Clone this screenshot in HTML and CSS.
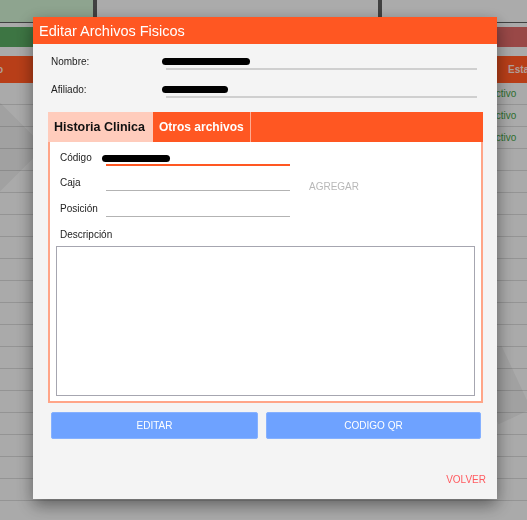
FILE: index.html
```html
<!DOCTYPE html>
<html lang="es">
<head>
  <meta charset="UTF-8">
  <meta name="viewport" content="width=device-width, initial-scale=1.0">
  <title>Editar Archivos Fisicos</title>
  <link rel="stylesheet" href="styles.css">
</head>
<body>

<div class="page">
  <div class="stats">
    <div class="stat stat-green"></div>
    <div class="stat"></div>
    <div class="stat"></div>
  </div>
  <div class="status-bar">
    <span class="status-ok"></span>
    <span class="status-off"></span>
  </div>
  <div class="list">
    <div class="list-head"><span class="col-name">Archivo</span><span class="col-state">Estado</span></div>
    <div class="list-row"><span class="col-state active">Activo</span></div>
    <div class="list-row"><span class="col-state active">Activo</span></div>
    <div class="list-row"><span class="col-state active">Activo</span></div>
    <div class="list-row"></div>
    <div class="list-row"></div>
    <div class="list-row"></div>
    <div class="list-row"></div>
    <div class="list-row"></div>
    <div class="list-row"></div>
    <div class="list-row"></div>
    <div class="list-row"></div>
    <div class="list-row"></div>
    <div class="list-row"></div>
    <div class="list-row"></div>
    <div class="list-row"></div>
    <div class="list-row"></div>
    <div class="list-row"></div>
    <div class="list-row"></div>
    <div class="list-row"></div>
  </div>
  <div class="watermark wm-left"></div>
  <div class="watermark wm-right"></div>
</div>

<div class="backdrop">
  <div class="modal">
    <div class="modal-header">Editar Archivos Fisicos</div>

    <div class="modal-body">
      <div class="info-row">
        <label>Nombre:</label>
        <div class="info-value"><span class="redacted redacted-lg"></span></div>
      </div>
      <div class="info-row">
        <label>Afiliado:</label>
        <div class="info-value"><span class="redacted redacted-md"></span></div>
      </div>

      <div class="tabs">
        <div class="tab-bar">
          <span class="tab active">Historia Clinica</span>
          <span class="tab">Otros archivos</span>
        </div>
        <div class="tab-panel">
          <div class="form-grid">
            <label class="row-1">Código</label>
            <div class="field focused row-1"><span class="redacted redacted-sm"></span></div>
            <label class="row-2">Caja</label>
            <div class="field row-2"></div>
            <button type="button" class="add-btn">AGREGAR</button>
            <label class="row-3">Posición</label>
            <div class="field row-3"></div>
          </div>
          <label class="desc-label">Descripción</label>
          <textarea class="desc-input"></textarea>
        </div>
      </div>

      <div class="actions">
        <button type="button" class="action-btn">EDITAR</button>
        <button type="button" class="action-btn">CODIGO QR</button>
      </div>

      <div class="modal-footer">
        <a class="back-link">VOLVER</a>
      </div>
    </div>
  </div>
</div>

</body>
</html>
```

FILE: styles.css
```css
/* Page behind the dialog */
body {
  margin: 0;
  font-family: 'Liberation Sans', Arial, sans-serif;
  background-color: #ececec;
  overflow: hidden;
  height: 520px;
}

.page {
  position: relative;
  height: 520px;
  overflow: hidden;
}

.stats {
  display: grid;
  grid-template-columns: 93px 1fr 145px;
  gap: 4px;
  height: 22px;
  background-color: #5a5a5a;
  border-bottom: 1px solid #5a5a5a;
}

.stat {
  background-color: #eeeeee;
}

.stat-green {
  background-color: #c5e3c6;
}

.status-bar {
  display: flex;
  height: 20px;
  margin-top: 4px;
}

.status-ok {
  flex: 1;
  background-color: #55a25d;
}

.status-off {
  flex: 1;
  background-color: #d46463;
}

.list {
  margin-top: 9px;
}

.list-head {
  display: flex;
  justify-content: space-between;
  align-items: center;
  height: 27px;
  background-color: #ff5722;
  color: #f6dcd4;
  font-size: 10px;
  font-weight: bold;
}

.col-name {
  margin-left: -34px;
}

.list-head .col-state {
  width: 19px;
  white-space: nowrap;
}

.list-row {
  display: flex;
  justify-content: flex-end;
  align-items: center;
  height: 22px;
  box-sizing: border-box;
  border-bottom: 1px solid #cdcdcd;
  font-size: 10px;
}

.list-row .col-state {
  width: 38px;
}

.active {
  color: #3f9a43;
}

.watermark {
  position: absolute;
  background-color: rgba(0, 0, 0, 0.05);
  transform: rotate(45deg);
}

.wm-left {
  left: -40px;
  top: 112px;
  width: 70px;
  height: 70px;
}

.wm-right {
  left: 482px;
  top: 350px;
  width: 36px;
  height: 70px;
  transform: rotate(-25deg);
}

/* Dialog */
.backdrop {
  position: fixed;
  top: 0;
  left: 0;
  right: 0;
  bottom: 0;
  background-color: rgba(0, 0, 0, 0.28);
  padding: 17px 0 0 33px;
}

.modal {
  width: 464px;
  background-color: #f4f4f4;
  box-shadow: 0 6px 16px rgba(0, 0, 0, 0.45);
}

.modal-header {
  display: flex;
  align-items: center;
  height: 27px;
  padding-left: 6px;
  background-color: #ff5722;
  color: #fff;
  font-size: 14.5px;
}

.modal-body {
  padding: 10px 14px 13px 15px;
}

.info-row {
  display: flex;
  align-items: flex-end;
  height: 16px;
  padding: 0 6px 0 3px;
}

.info-row + .info-row {
  margin-top: 12px;
}

.info-row label {
  width: 115px;
  padding-bottom: 2px;
  font-size: 10px;
  line-height: 12px;
  color: #222;
}

.info-value {
  display: flex;
  align-items: flex-end;
  flex: 1;
  height: 16px;
  box-sizing: border-box;
  border-bottom: 2px solid #cfcfcf;
}

.redacted {
  display: block;
  height: 7px;
  margin: 0 0 3px -4px;
  background-color: #000;
  border-radius: 4px;
}

.redacted-lg {
  width: 88px;
}

.redacted-md {
  width: 66px;
}

.redacted-sm {
  width: 68px;
  margin-bottom: 2px;
}

/* Tabs */
.tabs {
  margin-top: 14px;
}

.tab-bar {
  display: flex;
  height: 30px;
  background-color: #ff5722;
}

.tab {
  display: flex;
  align-items: center;
  width: 98px;
  box-sizing: border-box;
  padding: 0 6px;
  border-right: 1px solid #ffab91;
  color: #fff;
  font-size: 12px;
  font-weight: bold;
  white-space: nowrap;
}

.tab.active {
  width: 105px;
  border-right: none;
  background-color: #ffccbc;
  color: #111;
  font-size: 12.5px;
}

.tab-panel {
  padding: 0 6px 5px;
  border: 2px solid #ffa588;
  border-top: none;
  background-color: #fff;
}

.form-grid {
  display: grid;
  grid-template-columns: 46px 184px auto;
  grid-template-rows: 24px 25px 26px;
  padding-left: 4px;
}

.form-grid label {
  grid-column: 1;
  align-self: end;
  padding-bottom: 2px;
  font-size: 10px;
  line-height: 12px;
  color: #222;
}

.row-1 { grid-row: 1; }
.row-2 { grid-row: 2; }
.row-3 { grid-row: 3; }

.field {
  display: flex;
  align-items: flex-end;
  grid-column: 2;
  border-bottom: 1px solid #b3b3b3;
}

.field.focused {
  border-bottom: 2px solid #ff5722;
}

.add-btn {
  grid-column: 3;
  grid-row: 2;
  align-self: end;
  justify-self: start;
  margin: 0 0 -2px 19px;
  padding: 0;
  border: none;
  background: none;
  font-family: inherit;
  font-size: 10px;
  line-height: 12px;
  color: #b8b8b8;
}

.desc-label {
  display: block;
  margin-top: 12px;
  padding-left: 4px;
  font-size: 10px;
  line-height: 12px;
  color: #222;
}

.desc-input {
  display: block;
  width: 100%;
  height: 150px;
  box-sizing: border-box;
  margin: 5px 0 0;
  border: 1px solid #a6a6b0;
  resize: none;
}

/* Buttons */
.actions {
  display: grid;
  grid-template-columns: 207px 1fr;
  gap: 8px;
  margin-top: 9px;
  padding: 0 2px 0 3px;
}

.action-btn {
  height: 27px;
  border: 1px solid #86b1ff;
  border-radius: 2px;
  background-color: #6ea2ff;
  color: #fff;
  font-family: inherit;
  font-size: 10px;
}

.modal-footer {
  display: flex;
  justify-content: flex-end;
  margin: 35px -3px 0 0;
}

.back-link {
  font-size: 10px;
  line-height: 12px;
  color: #ff5a5f;
}
```
